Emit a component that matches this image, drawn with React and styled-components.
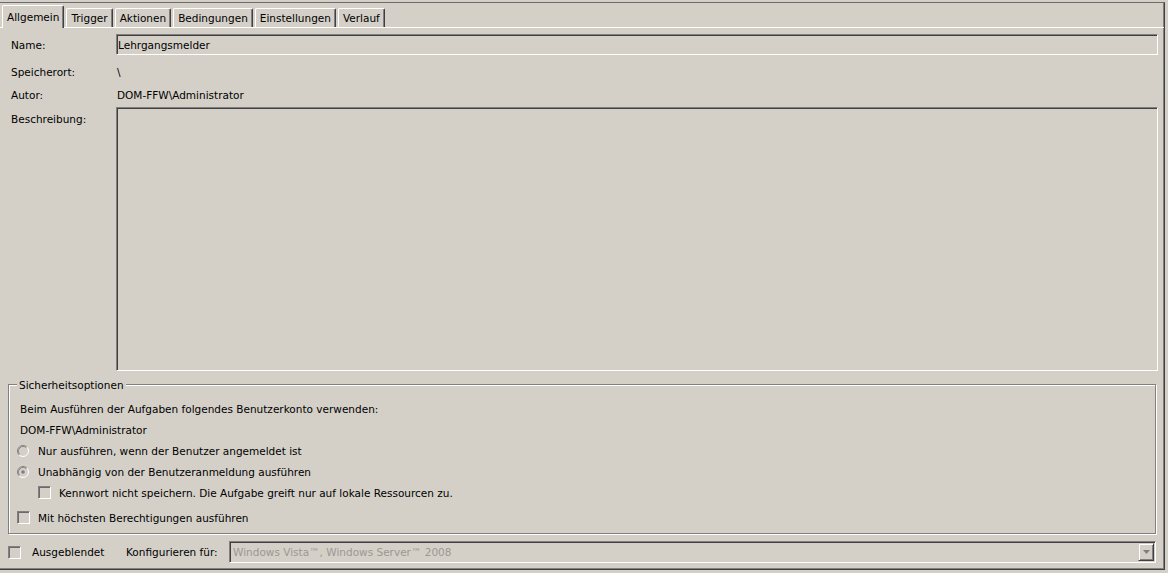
import React from "react";
import styled, { createGlobalStyle } from "styled-components";

// colors
const colors = {
  face: "#d4d0c8",
  shadow: "#808080",
  darkShadow: "#404040",
  highlight: "#ffffff",
  text: "#000000",
  grayText: "#9a9893",
};

const GlobalStyle = createGlobalStyle`
  html, body {
    margin: 0;
    padding: 0;
    background: ${colors.face};
  }
  body {
    font-family: "DejaVu Sans", "Liberation Sans", sans-serif;
    font-size: 10.5px;
    line-height: 14px;
    color: ${colors.text};
  }
`;

// window frame
const Frame = styled.div`
  box-sizing: border-box;
  width: 1165px;
  height: 568px;
  margin-top: 2px;
  border-top: 1px solid #6b6b6b;
  border-right: 1px solid ${colors.darkShadow};
  border-bottom: 1px solid ${colors.darkShadow};
  box-shadow: inset -1px -1px 0 ${colors.shadow};
  display: flex;
  flex-direction: column;
`;

// tabs
const TabStrip = styled.div`
  display: flex;
  align-items: flex-end;
  gap: 2px;
  height: 24px;
  padding-left: 2px;
`;

const Tab = styled.div`
  box-sizing: border-box;
  position: relative;
  z-index: ${(p) => (p.$active ? 1 : 0)};
  display: flex;
  align-items: center;
  height: ${(p) => (p.$active ? "23px" : "19px")};
  margin-bottom: ${(p) => (p.$active ? "-1px" : "0")};
  padding: ${(p) => (p.$active ? "0 4px 0 4px" : "0 4px")};
  background: ${colors.face};
  border-top: 1px solid ${colors.highlight};
  border-left: 1px solid ${colors.highlight};
  border-right: 1px solid ${colors.darkShadow};
  border-radius: 2px 2px 0 0;
  box-shadow: inset -1px 0 0 ${colors.shadow};
  white-space: nowrap;
`;

const Panel = styled.div`
  flex: 1;
  border-top: 1px solid ${colors.highlight};
  padding: 0 6px 0 8px;
  display: flex;
  flex-direction: column;
`;

// form rows
const FieldRow = styled.div`
  display: grid;
  grid-template-columns: 108px 1fr;
  margin-top: ${(p) => p.$mt}px;
  height: ${(p) => p.$h}px;
  align-items: ${(p) => (p.$top ? "start" : "center")};
`;

const Label = styled.span`
  padding-left: 3px;
  padding-top: ${(p) => (p.$top ? "5px" : "0")};
`;

const Value = styled.span`
  padding-left: 1px;
`;

const TextBox = styled.div`
  box-sizing: border-box;
  height: 100%;
  display: flex;
  align-items: ${(p) => (p.$multi ? "flex-start" : "center")};
  padding-left: 1px;
  border: 1px solid;
  border-color: ${colors.shadow} ${colors.highlight} ${colors.highlight} ${colors.shadow};
  box-shadow: inset 1px 1px 0 ${colors.darkShadow};
  white-space: nowrap;
`;

// group box
const GroupBox = styled.div`
  margin: 13px 2px 0 0;
  border: 1px solid ${colors.shadow};
  box-shadow: 1px 1px 0 ${colors.highlight}, inset 1px 1px 0 ${colors.highlight};
  padding: 0 0 5px 8px;
`;

const Legend = styled.div`
  width: fit-content;
  margin: -7px 0 6px 0;
  padding: 0 2px;
  background: ${colors.face};
`;

const GroupRow = styled.div`
  display: flex;
  align-items: center;
  height: 21px;
  padding-left: ${(p) => p.$indent || 0}px;
`;

const Option = styled.div`
  display: flex;
  align-items: center;
  height: 21px;
  margin-top: ${(p) => p.$mt || 0}px;
  padding-left: ${(p) => p.$indent || 0}px;
`;

const Glyph = styled.span`
  width: 21px;
  flex: none;
  display: flex;
  align-items: center;
`;

const CheckBox = styled.span`
  box-sizing: border-box;
  width: 13px;
  height: 13px;
  border: 1px solid;
  border-color: ${colors.shadow} ${colors.highlight} ${colors.highlight} ${colors.shadow};
  box-shadow: inset 1px 1px 0 #6a6a6a;
  background: ${colors.face};
`;

function Radio({ checked }) {
  return (
    <svg width="12" height="12" viewBox="0 0 12 12">
      <circle cx="6" cy="6" r="5" fill={colors.face} />
      <path d="M2.11 9.89 A5.5 5.5 0 0 1 9.89 2.11" fill="none" stroke={colors.shadow} strokeWidth="1" />
      <path d="M9.89 2.11 A5.5 5.5 0 0 1 2.11 9.89" fill="none" stroke={colors.highlight} strokeWidth="1" />
      <path d="M2.82 9.18 A4.5 4.5 0 0 1 9.18 2.82" fill="none" stroke="#8c8c8c" strokeWidth="1" />
      {checked && <circle cx="6" cy="6" r="1.8" fill={colors.shadow} />}
    </svg>
  );
}

// bottom bar
const BottomBar = styled.div`
  display: grid;
  grid-template-columns: 118px 103px 1fr;
  align-items: center;
  height: 22px;
  margin: 7px 2px 0 0;
`;

const InlineCheck = styled.div`
  display: flex;
  align-items: center;
  gap: 11px;
`;

const Combo = styled.div`
  box-sizing: border-box;
  height: 22px;
  display: flex;
  align-items: stretch;
  padding: 1px;
  border: 1px solid;
  border-color: ${colors.shadow} ${colors.highlight} ${colors.highlight} ${colors.shadow};
  box-shadow: inset 1px 1px 0 ${colors.darkShadow};
`;

const ComboText = styled.span`
  flex: 1;
  align-self: center;
  padding-left: 2px;
  color: ${colors.grayText};
  white-space: nowrap;
`;

const DropButton = styled.span`
  box-sizing: border-box;
  width: 16px;
  display: flex;
  align-items: center;
  justify-content: center;
  border: 1px solid;
  border-color: ${colors.face} ${colors.darkShadow} ${colors.darkShadow} ${colors.face};
  box-shadow: inset 1px 1px 0 ${colors.highlight}, inset -1px -1px 0 ${colors.shadow};
`;

const tabs = ["Allgemein", "Trigger", "Aktionen", "Bedingungen", "Einstellungen", "Verlauf"];

export default function App() {
  return (
    <>
      <GlobalStyle />
      <Frame>
        <TabStrip>
          {tabs.map((t, i) => (
            <Tab key={t} $active={i === 0}>{t}</Tab>
          ))}
        </TabStrip>
        <Panel>
          <FieldRow $mt={6} $h={21}>
            <Label>Name:</Label>
            <TextBox>Lehrgangsmelder</TextBox>
          </FieldRow>
          <FieldRow $mt={7} $h={20}>
            <Label>Speicherort:</Label>
            <Value>\</Value>
          </FieldRow>
          <FieldRow $mt={3} $h={20}>
            <Label>Autor:</Label>
            <Value>DOM-FFW\Administrator</Value>
          </FieldRow>
          <FieldRow $mt={2} $h={264} $top>
            <Label $top>Beschreibung:</Label>
            <TextBox $multi />
          </FieldRow>

          <GroupBox>
            <Legend>Sicherheitsoptionen</Legend>
            <GroupRow $indent={3}>Beim Ausführen der Aufgaben folgendes Benutzerkonto verwenden:</GroupRow>
            <GroupRow $indent={3}>DOM-FFW\Administrator</GroupRow>
            <Option>
              <Glyph><Radio /></Glyph>
              Nur ausführen, wenn der Benutzer angemeldet ist
            </Option>
            <Option>
              <Glyph><Radio checked /></Glyph>
              Unabhängig von der Benutzeranmeldung ausführen
            </Option>
            <Option $indent={21}>
              <Glyph><CheckBox /></Glyph>
              Kennwort nicht speichern. Die Aufgabe greift nur auf lokale Ressourcen zu.
            </Option>
            <Option $mt={4}>
              <Glyph><CheckBox /></Glyph>
              Mit höchsten Berechtigungen ausführen
            </Option>
          </GroupBox>

          <BottomBar>
            <InlineCheck>
              <CheckBox />
              Ausgeblendet
            </InlineCheck>
            <span>Konfigurieren für:</span>
            <Combo>
              <ComboText>Windows Vista™, Windows Server™ 2008</ComboText>
              <DropButton>
                <svg width="7" height="5" viewBox="0 0 7 5">
                  <polygon points="0,0 7,0 3.5,4" fill={colors.shadow} />
                </svg>
              </DropButton>
            </Combo>
          </BottomBar>
        </Panel>
      </Frame>
    </>
  );
}
